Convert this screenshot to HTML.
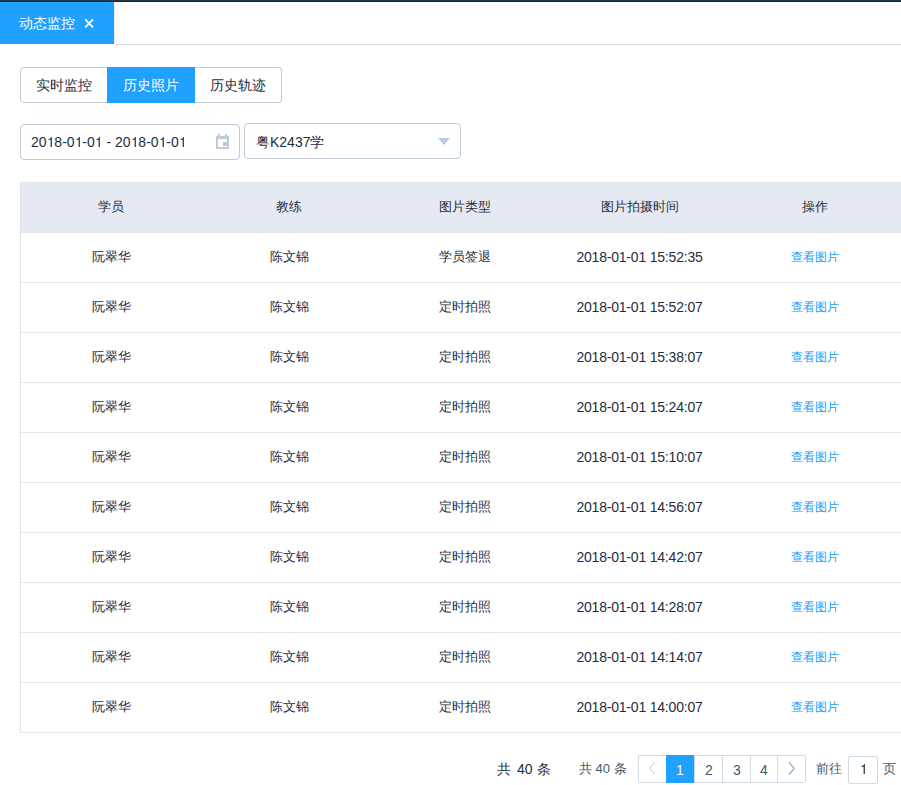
<!DOCTYPE html>
<html><head><meta charset="utf-8">
<style>
html,body{margin:0;padding:0;}
body{width:901px;height:785px;overflow:hidden;position:relative;background:#fff;font-family:"Liberation Sans",sans-serif;color:#1f2d3d;font-size:14px;}
.a{position:absolute;white-space:nowrap;}
#topbar{left:0;top:0;width:901px;height:2px;background:linear-gradient(#24364c 50%,#17283d 50%);}
#tab{left:0;top:2px;width:114px;height:42px;background:#20a0ff;color:#fff;}
#tabline{left:115px;top:44px;width:786px;height:1px;background:#d1dbe5;}
#tabsh{left:114px;top:2px;width:1px;height:42px;background:#eceef1;}
.btn{top:67px;height:36px;width:88px;box-sizing:border-box;border:1px solid #bfcbd9;background:#fff;line-height:34px;text-align:center;font-size:14px;}
.btn.on{background:#20a0ff;border-color:#20a0ff;color:#fff;}
.inp{box-sizing:border-box;border:1px solid #bfcbd9;border-radius:4px;height:36px;background:#fff;}
.tbl{left:20px;top:182px;width:900px;height:551px;box-sizing:border-box;border-left:1px solid #dfe6ec;border-top:1px solid #dfe6ec;}
.hdr{left:21px;top:183px;width:880px;height:49px;background:#e5e9f2;}
.hl{left:21px;width:880px;height:1px;background:#dfe6ec;}
.c{position:absolute;white-space:nowrap;text-align:center;width:200px;margin-left:-100px;line-height:20px;font-size:13px;}
.t{font-size:14px;letter-spacing:-0.2px;}
.pg{top:755px;height:28px;box-sizing:border-box;border:1px solid #d1dbe5;text-align:center;line-height:28px;font-size:14px;color:#48576a;background:#fff;}
</style></head><body>
<div class="a" id="topbar"></div>
<div class="a" id="tab"><span class="a" style="left:19px;top:11px;line-height:20px;font-size:14px;">动态监控</span><svg class="a" style="left:84px;top:16px;" width="11" height="11" viewBox="0 0 11 11"><path d="M1.2 1.4L9 9.4M9 1.4L1.2 9.4" stroke="#fff" stroke-width="1.7" fill="none"/></svg></div>
<div class="a" id="tabline"></div><div class="a" id="tabsh"></div>

<div class="a btn" style="left:20px;border-radius:4px 0 0 4px;">实时监控</div>
<div class="a btn on" style="left:107px;border-radius:0;">历史照片</div>
<div class="a btn" style="left:195px;width:87px;border-left:0;border-radius:0 4px 4px 0;">历史轨迹</div>

<div class="a inp" style="left:20px;top:124px;width:220px;">
  <span class="a" style="left:10px;top:7px;line-height:20px;">20<svg width="7.78" height="9.93" viewBox="0 0 556 709" style="vertical-align:baseline"><path transform="matrix(1 0 0 -1 0 709)" fill="currentColor" d="M259 505H102V568Q204 581 235 604Q266 627 289 709H347V0H259Z"/></svg>8-0<svg width="7.78" height="9.93" viewBox="0 0 556 709" style="vertical-align:baseline"><path transform="matrix(1 0 0 -1 0 709)" fill="currentColor" d="M259 505H102V568Q204 581 235 604Q266 627 289 709H347V0H259Z"/></svg>-0<svg width="7.78" height="9.93" viewBox="0 0 556 709" style="vertical-align:baseline"><path transform="matrix(1 0 0 -1 0 709)" fill="currentColor" d="M259 505H102V568Q204 581 235 604Q266 627 289 709H347V0H259Z"/></svg> - 20<svg width="7.78" height="9.93" viewBox="0 0 556 709" style="vertical-align:baseline"><path transform="matrix(1 0 0 -1 0 709)" fill="currentColor" d="M259 505H102V568Q204 581 235 604Q266 627 289 709H347V0H259Z"/></svg>8-0<svg width="7.78" height="9.93" viewBox="0 0 556 709" style="vertical-align:baseline"><path transform="matrix(1 0 0 -1 0 709)" fill="currentColor" d="M259 505H102V568Q204 581 235 604Q266 627 289 709H347V0H259Z"/></svg>-0<svg width="7.78" height="9.93" viewBox="0 0 556 709" style="vertical-align:baseline"><path transform="matrix(1 0 0 -1 0 709)" fill="currentColor" d="M259 505H102V568Q204 581 235 604Q266 627 289 709H347V0H259Z"/></svg></span>
  <svg class="a" style="left:195px;top:9px;" width="13" height="15" viewBox="0 0 13 15"><path fill="#bfcbd9" d="M2 0h2v2h5V0h2v2h2v13H0V2h2z M2 5v8h9V5z M7 8h4v4H7z"/></svg>
</div>
<div class="a inp" style="left:244px;top:123px;width:217px;">
  <span class="a" style="left:11px;top:8px;line-height:20px;">粤K2437学</span>
  <svg class="a" style="left:193px;top:14px;" width="12" height="8" viewBox="0 0 12 8"><path fill="#bfcbd9" d="M0 0h12L6 7z"/></svg>
</div>

<div class="a tbl"></div>
<div class="a hdr"></div>
<div class="a hl" style="top:232px"></div>
<div class="a hl" style="top:282px"></div>
<div class="a hl" style="top:332px"></div>
<div class="a hl" style="top:382px"></div>
<div class="a hl" style="top:432px"></div>
<div class="a hl" style="top:482px"></div>
<div class="a hl" style="top:532px"></div>
<div class="a hl" style="top:582px"></div>
<div class="a hl" style="top:632px"></div>
<div class="a hl" style="top:682px"></div>
<div class="a hl" style="top:732px"></div>

<div class="c" style="left:111px;top:197px;">学员</div>
<div class="c" style="left:289px;top:197px;">教练</div>
<div class="c" style="left:465px;top:197px;">图片类型</div>
<div class="c" style="left:639.5px;top:197px;">图片拍摄时间</div>
<div class="c" style="left:815px;top:197px;">操作</div>
<div class="c" style="left:111px;top:247px;">阮翠华</div>
<div class="c" style="left:289px;top:247px;">陈文锦</div>
<div class="c" style="left:465px;top:247px;">学员签退</div>
<div class="c t" style="left:639.5px;top:247px;">2018-01-01 15:52:35</div>
<div class="c" style="left:815px;top:247px;color:#20a0ff;font-size:12px;">查看图片</div>
<div class="c" style="left:111px;top:297px;">阮翠华</div>
<div class="c" style="left:289px;top:297px;">陈文锦</div>
<div class="c" style="left:465px;top:297px;">定时拍照</div>
<div class="c t" style="left:639.5px;top:297px;">2018-01-01 15:52:07</div>
<div class="c" style="left:815px;top:297px;color:#20a0ff;font-size:12px;">查看图片</div>
<div class="c" style="left:111px;top:347px;">阮翠华</div>
<div class="c" style="left:289px;top:347px;">陈文锦</div>
<div class="c" style="left:465px;top:347px;">定时拍照</div>
<div class="c t" style="left:639.5px;top:347px;">2018-01-01 15:38:07</div>
<div class="c" style="left:815px;top:347px;color:#20a0ff;font-size:12px;">查看图片</div>
<div class="c" style="left:111px;top:397px;">阮翠华</div>
<div class="c" style="left:289px;top:397px;">陈文锦</div>
<div class="c" style="left:465px;top:397px;">定时拍照</div>
<div class="c t" style="left:639.5px;top:397px;">2018-01-01 15:24:07</div>
<div class="c" style="left:815px;top:397px;color:#20a0ff;font-size:12px;">查看图片</div>
<div class="c" style="left:111px;top:447px;">阮翠华</div>
<div class="c" style="left:289px;top:447px;">陈文锦</div>
<div class="c" style="left:465px;top:447px;">定时拍照</div>
<div class="c t" style="left:639.5px;top:447px;">2018-01-01 15:10:07</div>
<div class="c" style="left:815px;top:447px;color:#20a0ff;font-size:12px;">查看图片</div>
<div class="c" style="left:111px;top:497px;">阮翠华</div>
<div class="c" style="left:289px;top:497px;">陈文锦</div>
<div class="c" style="left:465px;top:497px;">定时拍照</div>
<div class="c t" style="left:639.5px;top:497px;">2018-01-01 14:56:07</div>
<div class="c" style="left:815px;top:497px;color:#20a0ff;font-size:12px;">查看图片</div>
<div class="c" style="left:111px;top:547px;">阮翠华</div>
<div class="c" style="left:289px;top:547px;">陈文锦</div>
<div class="c" style="left:465px;top:547px;">定时拍照</div>
<div class="c t" style="left:639.5px;top:547px;">2018-01-01 14:42:07</div>
<div class="c" style="left:815px;top:547px;color:#20a0ff;font-size:12px;">查看图片</div>
<div class="c" style="left:111px;top:597px;">阮翠华</div>
<div class="c" style="left:289px;top:597px;">陈文锦</div>
<div class="c" style="left:465px;top:597px;">定时拍照</div>
<div class="c t" style="left:639.5px;top:597px;">2018-01-01 14:28:07</div>
<div class="c" style="left:815px;top:597px;color:#20a0ff;font-size:12px;">查看图片</div>
<div class="c" style="left:111px;top:647px;">阮翠华</div>
<div class="c" style="left:289px;top:647px;">陈文锦</div>
<div class="c" style="left:465px;top:647px;">定时拍照</div>
<div class="c t" style="left:639.5px;top:647px;">2018-01-01 14:14:07</div>
<div class="c" style="left:815px;top:647px;color:#20a0ff;font-size:12px;">查看图片</div>
<div class="c" style="left:111px;top:697px;">阮翠华</div>
<div class="c" style="left:289px;top:697px;">陈文锦</div>
<div class="c" style="left:465px;top:697px;">定时拍照</div>
<div class="c t" style="left:639.5px;top:697px;">2018-01-01 14:00:07</div>
<div class="c" style="left:815px;top:697px;color:#20a0ff;font-size:12px;">查看图片</div>

<div class="a" style="left:497px;top:760px;line-height:18px;font-size:14px;color:#1f2d3d;">共</div><div class="a" style="left:517px;top:760px;line-height:18px;font-size:14px;color:#1f2d3d;">40</div><div class="a" style="left:537px;top:760px;line-height:18px;font-size:14px;color:#1f2d3d;">条</div>
<div class="a" style="left:579px;top:760px;line-height:18px;font-size:13px;color:#48576a;">共 40 条</div>
<div class="a pg" style="left:638px;width:29px;border-right:0;border-radius:2px 0 0 2px;"><svg class="a" style="left:10px;top:6px" width="8" height="14" viewBox="0 0 8 14"><path d="M6 0.3L0.4 6.4L6 12.3" fill="none" stroke="#d1dbe5" stroke-width="1.2"/></svg></div>
<div class="a pg" style="left:666px;width:28px;background:#20a0ff;border-color:#20a0ff;color:#fff;">1</div>
<div class="a pg" style="left:694px;width:29px;border-right:0;">2</div>
<div class="a pg" style="left:722px;width:29px;border-right:0;">3</div>
<div class="a pg" style="left:750px;width:28px;">4</div>
<div class="a pg" style="left:777px;width:29px;border-radius:0 2px 2px 0;"><svg class="a" style="left:10px;top:6px" width="8" height="14" viewBox="0 0 8 14"><path d="M1 0.3L6.2 6.4L1 12.5" fill="none" stroke="#97a8be" stroke-width="1.2"/></svg></div>
<div class="a" style="left:816px;top:760px;line-height:18px;font-size:13px;color:#48576a;">前往</div>
<div class="a pg" style="left:848px;top:756px;width:30px;border-radius:2px;color:#1f2d3d;line-height:24px;"><svg width="7.78" height="9.93" viewBox="0 0 556 709" style="vertical-align:baseline;position:relative;left:0.4px"><path transform="matrix(1 0 0 -1 0 709)" fill="currentColor" d="M259 505H102V568Q204 581 235 604Q266 627 289 709H347V0H259Z"/></svg></div>
<div class="a" style="left:883px;top:760px;line-height:18px;font-size:13px;color:#48576a;">页</div>
</body></html>
